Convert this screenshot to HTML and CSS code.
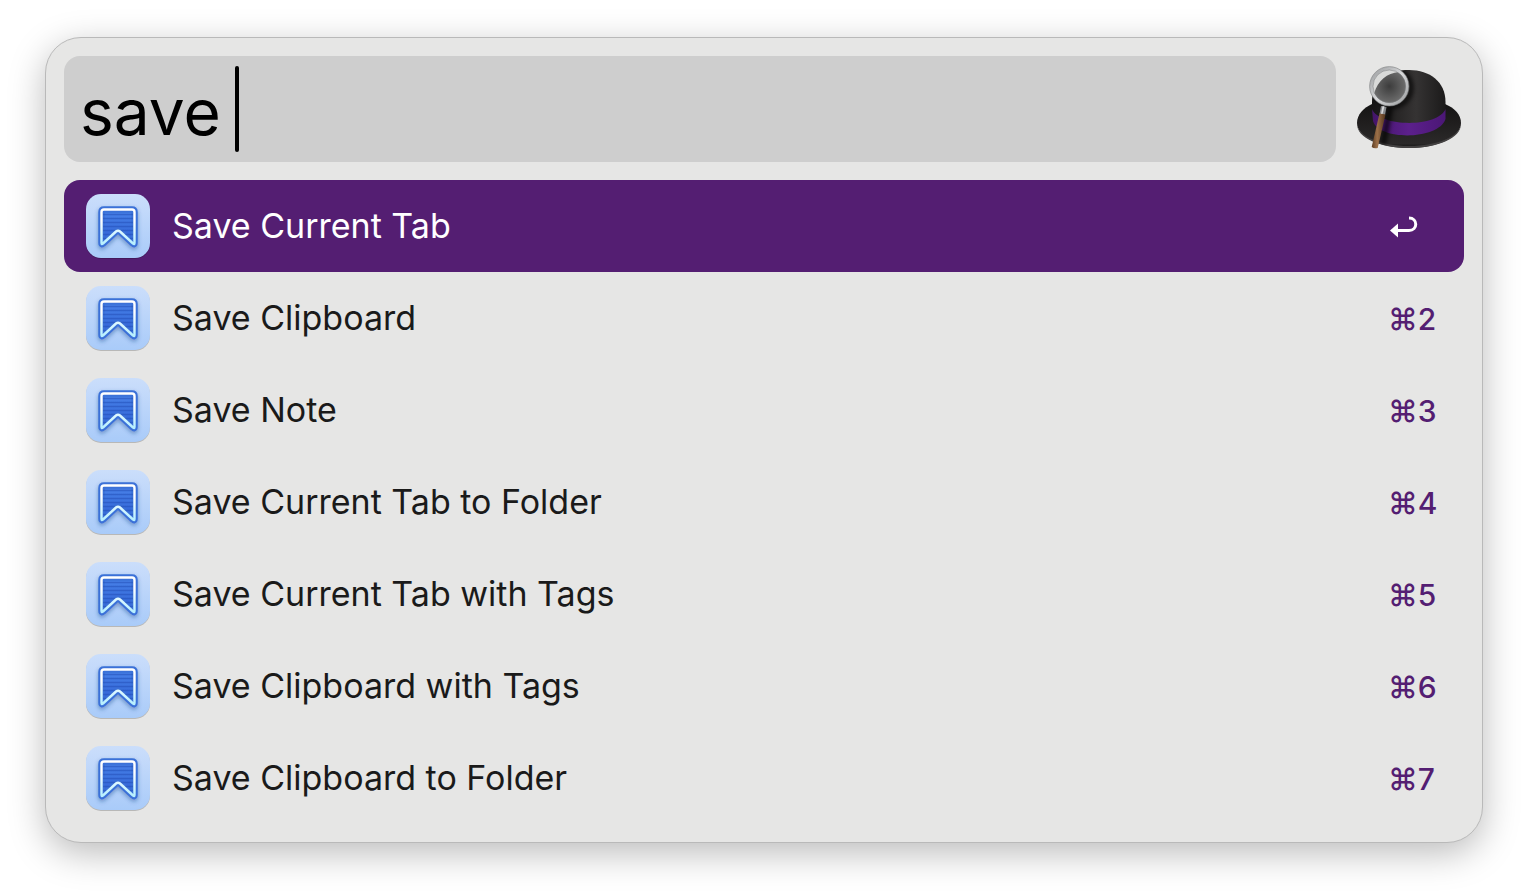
FILE: index.html
```html
<!DOCTYPE html>
<html lang="en">
<head>
<meta charset="utf-8">
<title>Launcher</title>
<link rel="stylesheet" href="styles.css">
</head>
<body>
<svg class="defs" aria-hidden="true">
  <defs>
    <linearGradient id="tile" x1="0" y1="0" x2="0" y2="1"><stop offset="0" stop-color="#cbdefb"/><stop offset="1" stop-color="#a9cbf9"/></linearGradient>
    <linearGradient id="fill" x1="0" y1="0" x2="0" y2="1"><stop offset="0" stop-color="#4a83e9"/><stop offset="1" stop-color="#2d5fd4"/></linearGradient>
    <linearGradient id="line" x1="0" y1="0" x2="0" y2="1"><stop offset="0.3" stop-color="#ffffff"/><stop offset="1" stop-color="#b5efff"/></linearGradient>
    <filter id="soft" x="-30%" y="-30%" width="160%" height="170%"><feDropShadow dx="0" dy="2" stdDeviation="2" flood-color="#1d3f86" flood-opacity="0.45"/></filter>
    <symbol id="bookmark" viewBox="0 0 64 64" overflow="visible">
      <rect y="1" width="64" height="64" rx="15" fill="#000" opacity="0.2"/>
      <rect width="64" height="64" rx="15" fill="url(#tile)"/>
      <path d="M18 15.500H46Q48.500 15.500 48.500 18V49Q48.500 51 47 49.500L34 37.500Q32 36 30 37.500L17 49.500Q15.500 51 15.500 49V18Q15.500 15.500 18 15.500Z" fill="url(#fill)" stroke="#3b71d8" stroke-width="6.500" stroke-linejoin="round" filter="url(#soft)"/>
      <path d="M17 20.500H47M17 24.500H47M17 28.500H47M17 32.500H47M17 36.500H29M35 36.500H47M17 40.500H25M39 40.500H47M17 44.500H20M44 44.500H47" stroke="#234fb8" stroke-width="1.300" opacity="0.55"/>
      <path d="M18 15.500H46Q48.500 15.500 48.500 18V49Q48.500 51 47 49.500L34 37.500Q32 36 30 37.500L17 49.500Q15.500 51 15.500 49V18Q15.500 15.500 18 15.500Z" fill="none" stroke="url(#line)" stroke-width="2.400" stroke-linejoin="round"/>
    </symbol>
  </defs>
</svg>
<main class="panel">
  <header class="search">
    <label class="field">
      <input class="query" type="text" value="save " aria-label="Search" spellcheck="false" autocomplete="off">
      <span class="caret"></span>
    </label>
    <svg class="hat" viewBox="0 0 108 106" role="img" aria-label="Bowler hat with magnifying glass">
      <defs>
        <linearGradient id="crown" x1="0" y1="0" x2="1" y2="0"><stop offset="0" stop-color="#161515"/><stop offset="0.6" stop-color="#353333"/><stop offset="1" stop-color="#1b1a1a"/></linearGradient>
        <linearGradient id="band" x1="0" y1="0" x2="1" y2="0"><stop offset="0" stop-color="#431569"/><stop offset="0.5" stop-color="#5c208c"/><stop offset="1" stop-color="#4b1776"/></linearGradient>
        <linearGradient id="brim" x1="0" y1="0" x2="0" y2="1"><stop offset="0" stop-color="#151414"/><stop offset="0.9" stop-color="#2b2929"/><stop offset="1" stop-color="#111"/></linearGradient>
        <radialGradient id="glass"><stop offset="0" stop-color="#3c3c3c"/><stop offset="1" stop-color="#707070"/></radialGradient>
        <linearGradient id="ring" x1="0" y1="0" x2="1" y2="1"><stop offset="0" stop-color="#9a9c9e"/><stop offset="0.5" stop-color="#d7d8da"/><stop offset="1" stop-color="#9a9c9e"/></linearGradient>
        <linearGradient id="wood" x1="0" y1="0" x2="1" y2="0"><stop offset="0" stop-color="#5c3c22"/><stop offset="0.4" stop-color="#9c7049"/><stop offset="1" stop-color="#53351d"/></linearGradient>
        <filter id="shade" x="-30%" y="-30%" width="160%" height="160%"><feGaussianBlur stdDeviation="2"/></filter>
        <clipPath id="lens"><circle cx="33.300" cy="30.300" r="17"/></clipPath>
        <clipPath id="silhouette"><path d="M16 62V46C16 24 32 14 53 14S89.500 26 89.500 46V48C99 53 105 60 105 68C105 81 82 92 53 92S1 81 1 68C1 59 7 53 16 48Z"/></clipPath>
      </defs>
      <path d="M16 48C7 52 1 59 1 67C1 81 24 92 53 92S105 81 105 67C105 59 99 52 89 48Z" fill="url(#brim)"/>
      <path d="M1 68C2 80 24 90 53 90S104 80 105 68C105 82 82 92 53 92S1 82 1 68Z" fill="#434141"/>
      <path d="M16 56V46C16 24 32 14 53 14S89.500 26 89.500 46V58C84 70 22 72 16 56Z" fill="url(#crown)"/>
      <path d="M16 53C23 71 82 72 89.500 53V63C83 84 23 85 17 65Z" fill="url(#band)"/>
      <g clip-path="url(#silhouette)"><g filter="url(#shade)" fill="none" stroke="#000" opacity="0.7"><circle cx="37" cy="32" r="18" stroke-width="5"/><path d="M34 52L27 89" stroke-width="6"/></g></g>
      <g clip-path="url(#lens)">
        <circle cx="33.300" cy="30.300" r="18" fill="url(#glass)"/>
        <path d="M14 12H45L43 16C31 17 22 24 18 38H12Z" fill="#d9dad9"/>
      </g>
      <circle cx="33.300" cy="30.300" r="18" fill="none" stroke="url(#ring)" stroke-width="3.200"/>
      <circle cx="33.300" cy="30.300" r="19.700" fill="none" stroke="#77797b" stroke-width="0.600"/>
      <circle cx="33.300" cy="30.300" r="16.300" fill="none" stroke="#77797b" stroke-width="0.500"/>
      <path d="M25 50L30.500 51L29 59L23.500 58Z" fill="#85878a"/>
      <path d="M26.500 50L28.500 50.500L26.500 58L25 58Z" fill="#d7d8da"/>
      <path d="M23.500 57.500L29.500 58.500L21.700 92Q18 93 15.700 91Z" fill="url(#wood)"/>
    </svg>
  </header>
  <ul class="results">
    <li><button class="row selected" type="button"><svg class="icon" aria-hidden="true"><use href="#bookmark"/></svg><span class="title">Save Current Tab</span><span class="key"><svg class="return" viewBox="-2 0 30 22" role="img" aria-label="Return"><path d="M0 14.500L8 7.500V21.500Z" fill="#fff"/><path d="M7 14.500H19C28 14.500 28 2 19 2" fill="none" stroke="#fff" stroke-width="3"/></svg></span></button></li>
    <li><button class="row" type="button"><svg class="icon" aria-hidden="true"><use href="#bookmark"/></svg><span class="title">Save Clipboard</span><span class="key">⌘2</span></button></li>
    <li><button class="row" type="button"><svg class="icon" aria-hidden="true"><use href="#bookmark"/></svg><span class="title">Save Note</span><span class="key">⌘3</span></button></li>
    <li><button class="row" type="button"><svg class="icon" aria-hidden="true"><use href="#bookmark"/></svg><span class="title">Save Current Tab to Folder</span><span class="key">⌘4</span></button></li>
    <li><button class="row" type="button"><svg class="icon" aria-hidden="true"><use href="#bookmark"/></svg><span class="title">Save Current Tab with Tags</span><span class="key">⌘5</span></button></li>
    <li><button class="row" type="button"><svg class="icon" aria-hidden="true"><use href="#bookmark"/></svg><span class="title">Save Clipboard with Tags</span><span class="key">⌘6</span></button></li>
    <li><button class="row" type="button"><svg class="icon" aria-hidden="true"><use href="#bookmark"/></svg><span class="title">Save Clipboard to Folder</span><span class="key">⌘7</span></button></li>
  </ul>
</main>
</body>
</html>
```
FILE: styles.css
```css
* { box-sizing: border-box; }

body {
  margin: 0;
  padding: 37px 45px 53px;
  background: #fff;
  color: #1a1a1a;
  font-family: Inter, "Liberation Sans", sans-serif;
}

.defs { position: absolute; width: 0; height: 0; }

.panel {
  padding: 18px;
  border: 1px solid #b9b9b9;
  border-radius: 36px;
  background: #e6e6e5;
  box-shadow: 0 10px 36px rgba(0, 0, 0, 0.27);
}

.search {
  display: flex;
  align-items: center;
  gap: 20px;
  margin-bottom: 18px;
}

.field {
  position: relative;
  flex: 1;
  display: block;
  height: 106px;
}

.query {
  display: block;
  width: 100%;
  height: 100%;
  padding: 4px 16px 0;
  border: 0;
  border-radius: 16px;
  outline: 0;
  background: #cecece;
  color: #000;
  font: 400 64px Inter, "Liberation Sans", sans-serif;
}

.caret {
  position: absolute;
  left: 171px;
  top: 10px;
  width: 4px;
  height: 86px;
  border-radius: 2px;
  background: #000;
}

.hat { flex: none; width: 108px; height: 106px; }

.results { margin: 0; padding: 0; list-style: none; }

.row {
  display: flex;
  align-items: center;
  gap: 22px;
  width: 100%;
  height: 92px;
  padding: 0 22px;
  border: 0;
  border-radius: 16px;
  background: none;
  color: inherit;
  font: 400 34px/44px Inter, "Liberation Sans", sans-serif;
  text-align: left;
}

.selected { background: #541e72; color: #fff; }

.icon { flex: none; width: 64px; height: 64px; overflow: visible; }

.title { flex: 1; }

.key {
  width: 54px;
  padding-top: 2px;
  color: #541e72;
  font-size: 30px;
  font-weight: 500;
}

.return { display: block; width: 30px; height: 22px; }
```
